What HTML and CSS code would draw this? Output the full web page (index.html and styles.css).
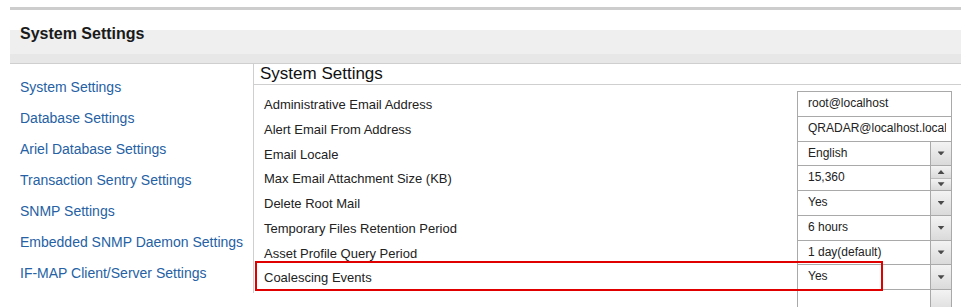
FILE: index.html
```html
<!DOCTYPE html>
<html lang="en">
<head>
<meta charset="utf-8">
<title>System Settings</title>
<link rel="stylesheet" href="styles.css">
</head>
<body>
<div class="page">
  <div class="topline"></div>
  <header class="section-head"><h1>System Settings</h1></header>
  <div class="content">
    <nav class="nav">
      <a href="#">System Settings</a>
      <a href="#">Database Settings</a>
      <a href="#">Ariel Database Settings</a>
      <a href="#">Transaction Sentry Settings</a>
      <a href="#">SNMP Settings</a>
      <a href="#">Embedded SNMP Daemon Settings</a>
      <a href="#">IF-MAP Client/Server Settings</a>
    </nav>
    <main class="panel">
      <div class="panel-title">System Settings</div>
      <div class="rows">
        <div class="row">
          <span class="label">Administrative Email Address</span>
          <div class="field"><span class="value">root@localhost</span></div>
        </div>
        <div class="row">
          <span class="label">Alert Email From Address</span>
          <div class="field"><span class="value">QRADAR@localhost.localdomain</span></div>
        </div>
        <div class="row">
          <span class="label">Email Locale</span>
          <div class="field"><span class="value">English</span><span class="btn"><i class="down"></i></span></div>
        </div>
        <div class="row">
          <span class="label">Max Email Attachment Size (KB)</span>
          <div class="field"><span class="value">15,360</span><span class="btn spin"><span class="half"><i class="up"></i></span><span class="half"><i class="down"></i></span></span></div>
        </div>
        <div class="row">
          <span class="label">Delete Root Mail</span>
          <div class="field"><span class="value">Yes</span><span class="btn"><i class="down"></i></span></div>
        </div>
        <div class="row">
          <span class="label">Temporary Files Retention Period</span>
          <div class="field"><span class="value">6 hours</span><span class="btn"><i class="down"></i></span></div>
        </div>
        <div class="row">
          <span class="label">Asset Profile Query Period</span>
          <div class="field"><span class="value">1 day(default)</span><span class="btn"><i class="down"></i></span></div>
        </div>
        <div class="row">
          <span class="label">Coalescing Events</span>
          <div class="field"><span class="value">Yes</span><span class="btn"><i class="down"></i></span></div>
        </div>
        <div class="row">
          <span class="label"></span>
          <div class="field"><span class="value"></span><span class="btn"></span></div>
        </div>
      </div>
      <div class="highlight"></div>
    </main>
  </div>
</div>
</body>
</html>
```
FILE: styles.css
```css
html, body {
  margin: 0;
  padding: 0;
  background: #fff;
  overflow: hidden;
}
body {
  font-family: "Liberation Sans", Arial, sans-serif;
  color: #222;
}
.page {
  margin: 0 4px 0 10px;
}
.topline {
  margin-top: 7px;
  height: 3px;
  background: #cdcdcd;
}
.section-head {
  padding: 15px 10px 20px;
  background: linear-gradient(#fff 0 20px, #efefef 20px 44px, #e7e7e7 44px);
  border-bottom: 1px solid #cfcfcf;
}
.section-head h1 {
  margin: 0;
  font-size: 16px;
  line-height: 18px;
  font-weight: bold;
  color: #1a1a1a;
}
.content {
  display: flex;
  align-items: flex-start;
}
.nav {
  width: 244px;
  flex: none;
  box-sizing: border-box;
  padding: 8px 0 4px 10px;
  border-right: 1px solid #cfcfcf;
}
.nav a {
  display: block;
  font-size: 14px;
  line-height: 31px;
  color: #2561a4;
  text-decoration: none;
  white-space: nowrap;
}
.panel {
  flex: 1;
  position: relative;
  min-width: 0;
}
.panel-title {
  height: 20px;
  line-height: 20px;
  font-size: 17px;
  padding-left: 6px;
  border-bottom: 1px solid #cfcfcf;
  color: #111;
}
.rows {
  padding-top: 6px;
}
.row {
  display: flex;
  justify-content: space-between;
  align-items: flex-start;
  height: 24.75px;
  padding: 0 9px 0 10px;
}
.label {
  font-size: 13px;
  line-height: 25px;
  padding-top: 1px;
  color: #222;
  white-space: nowrap;
}
.field {
  width: 155px;
  height: 25.75px;
  box-sizing: border-box;
  border: 1px solid #a9a9a9;
  display: flex;
  background: #fff;
}
.value {
  flex: 1;
  min-width: 0;
  padding: 0 0 0 10px;
  margin-right: 5px;
  font-size: 12px;
  line-height: 22px;
  white-space: nowrap;
  overflow: hidden;
  color: #222;
}
.btn {
  width: 20px;
  flex: none;
  border-left: 1px solid #a9a9a9;
  background: linear-gradient(#f3f3f3, #dadada);
  display: flex;
  align-items: center;
  justify-content: center;
}
.value + .btn {
  margin-left: -5px;
}
.btn.spin {
  flex-direction: column;
  align-items: stretch;
  background: none;
}
.half {
  flex: 1;
  display: flex;
  align-items: center;
  justify-content: center;
  background: linear-gradient(#f3f3f3, #dadada);
}
.half + .half {
  border-top: 1px solid #bdbdbd;
}
.down, .up {
  display: block;
  width: 7px;
  height: 4px;
  background: #4a4a4a;
}
.down {
  clip-path: polygon(0 0, 100% 0, 50% 100%);
}
.up {
  clip-path: polygon(50% 0, 100% 100%, 0 100%);
}
.highlight {
  position: absolute;
  left: 1px;
  top: 197px;
  width: 628px;
  height: 30px;
  box-sizing: border-box;
  border: 2px solid #e00000;
  pointer-events: none;
}
```
